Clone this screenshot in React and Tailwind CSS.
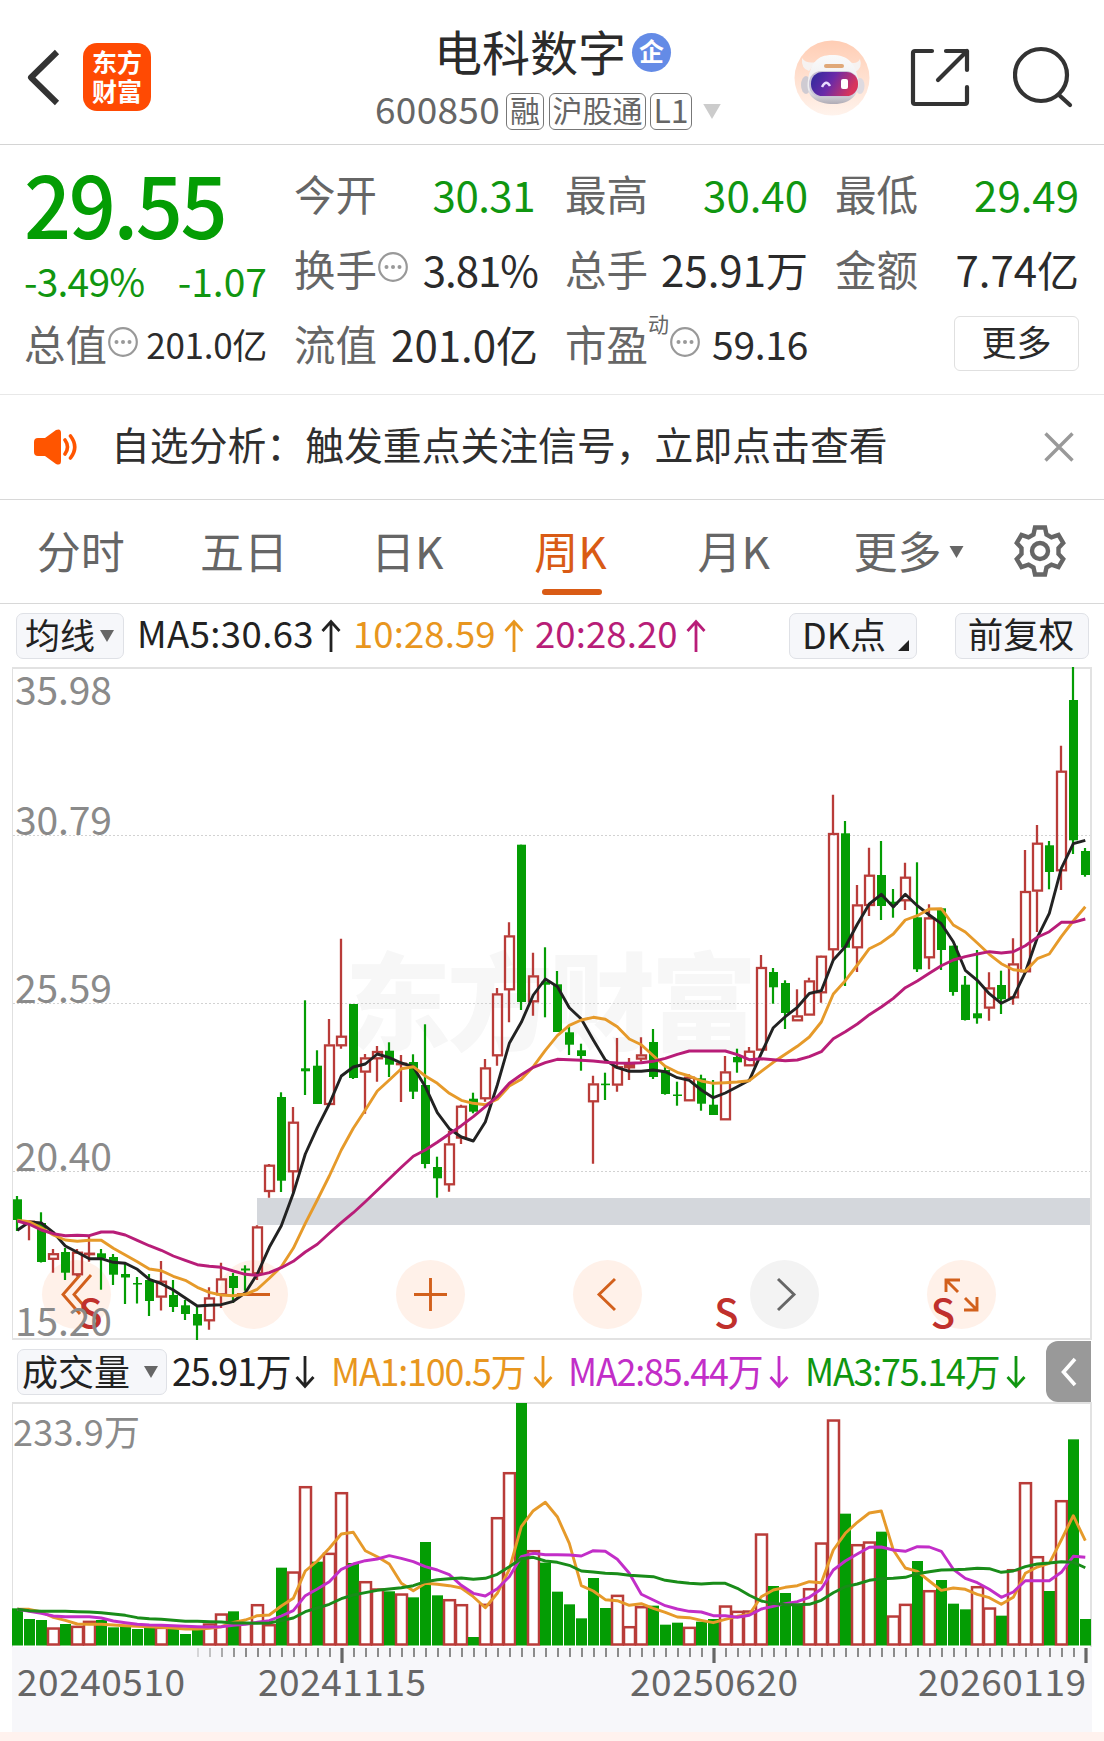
import React from "react";

const FIRST_X = 17;
const STEP = 12;
const GREEN = "#049d04";
const RED = "#b93c39";

// [direction, high, body top, body bottom, low]
const CANDLES = [
  ["g", 1196, 1199.3, 1220, 1231], ["r", 1221, 1221, 1222, 1240.3], ["g", 1212.3, 1223, 1262, 1262.5],
  ["r", 1249, 1253.5, 1259.5, 1272.7], ["g", 1248, 1252, 1272.7, 1280], ["r", 1249, 1252, 1275, 1276.5],
  ["r", 1235, 1253, 1253.5, 1261.7], ["g", 1249, 1253.3, 1258.3, 1289.7], ["g", 1254, 1257, 1274.7, 1285],
  ["g", 1264, 1274, 1277.5, 1304], ["g", 1277, 1283, 1284.5, 1303.5], ["g", 1274, 1280, 1301, 1316],
  ["r", 1261, 1281, 1297.3, 1310.5], ["g", 1280, 1295, 1307, 1312], ["g", 1300, 1305.3, 1314, 1320],
  ["g", 1306, 1314, 1325.5, 1340], ["r", 1287.3, 1297.7, 1321, 1329.7], ["r", 1262.7, 1278.7, 1295, 1308],
  ["g", 1273, 1276, 1288, 1303], ["g", 1265.3, 1268.5, 1270.5, 1290.7], ["r", 1225.3, 1226.7, 1274, 1280],
  ["r", 1164, 1165, 1191.7, 1197.7], ["g", 1092.3, 1097, 1180.7, 1192], ["r", 1107, 1122, 1172, 1192],
  ["g", 1000.3, 1068.3, 1071.3, 1095], ["g", 1050.3, 1065.7, 1104, 1104], ["r", 1019, 1044.7, 1104.7, 1104.7],
  ["r", 938.7, 1036, 1046, 1048.7], ["g", 1004, 1004, 1078, 1079], ["r", 1054, 1057.7, 1072.3, 1113.7],
  ["r", 1046, 1051.3, 1059, 1081.7], ["g", 1042.3, 1050.7, 1064.7, 1077], ["r", 1055, 1063, 1063.5, 1102],
  ["g", 1054.3, 1062, 1091.7, 1099], ["g", 1024.3, 1085, 1164, 1168.3], ["g", 1156.7, 1167, 1178.3, 1197.7],
  ["r", 1130.7, 1143.7, 1185, 1191.7], ["r", 1104.7, 1106, 1138.3, 1144], ["g", 1092.7, 1098.7, 1111.7, 1113.3],
  ["r", 1059, 1067.7, 1099, 1101.7], ["r", 988, 993.7, 1056, 1065.7], ["r", 922.3, 935.7, 990, 1022.3],
  ["g", 844.7, 844.7, 1002, 1010], ["r", 952.7, 975.7, 1002, 1015.7], ["g", 947.3, 981.7, 984.7, 1017.3],
  ["g", 971, 984.3, 1032, 1032], ["g", 1026.7, 1032.3, 1044.7, 1055], ["g", 1043.7, 1050.3, 1056, 1070.7],
  ["r", 1075.7, 1083.7, 1102, 1163.7], ["g", 1072.7, 1083.6, 1085.2, 1100], ["r", 1038, 1066.5, 1085.3, 1091.7],
  ["r", 1058, 1064.3, 1068, 1080], ["r", 1037.3, 1054.7, 1059.3, 1061.7], ["g", 1029, 1042, 1077, 1079],
  ["g", 1067, 1070, 1094, 1094.7], ["g", 1081.7, 1094.5, 1096, 1105.7], ["r", 1074.3, 1077, 1101, 1101],
  ["g", 1074.7, 1078.3, 1103.7, 1110.7], ["g", 1080, 1104.7, 1115, 1115], ["r", 1056, 1071.7, 1120, 1120],
  ["g", 1048.7, 1057, 1062.3, 1072.7], ["r", 1047, 1051, 1066, 1066], ["r", 955, 967.3, 1050.3, 1050.3],
  ["g", 968, 972, 987.3, 1003.7], ["g", 980.3, 983, 1013, 1029], ["r", 989.3, 1015.7, 1021, 1021],
  ["r", 977.7, 980.7, 1015.3, 1015.3], ["r", 955.7, 956, 993, 1002.7], ["r", 794.7, 833.3, 950, 960],
  ["g", 821, 833.3, 947.7, 986], ["r", 885, 904.7, 948, 972], ["r", 847.7, 875, 905.7, 916],
  ["g", 841, 875, 906, 920], ["g", 889, 901.7, 904.7, 917.7], ["r", 862.7, 877, 901, 910],
  ["g", 862.3, 917.3, 969.3, 972], ["r", 904.3, 917.7, 958, 969.3], ["g", 908.3, 908.3, 950, 970],
  ["g", 945.7, 945.7, 992, 995.7], ["g", 976, 984.7, 1020, 1020.5], ["g", 950, 1013.3, 1018.3, 1023.7],
  ["r", 972.3, 987.7, 1008.3, 1020.7], ["g", 970.7, 985, 999.3, 1014], ["r", 938.3, 963.7, 998, 1004.7],
  ["r", 850, 891.3, 972, 972], ["r", 825, 843, 891.3, 932], ["g", 841, 845.3, 872, 889.3],
  ["r", 745.7, 771, 871, 890], ["g", 667, 700, 840.3, 854], ["g", 848, 851, 875, 876.7],
];

const MA5 = [1230.3, 1222, 1223, 1232.3, 1246, 1252.3, 1258.7, 1258.7, 1262.3, 1263.3, 1269.3, 1279.3, 1283.7, 1290, 1298, 1306, 1305.3, 1304.7, 1301.3, 1292.7, 1274, 1247.3, 1225.7, 1193.3, 1154, 1127.7, 1104, 1076, 1067, 1064, 1054, 1057.7, 1063, 1066.7, 1086.7, 1112.7, 1128.7, 1137, 1141, 1122, 1085, 1043.3, 1022.3, 995, 979, 986.5, 1007.7, 1019, 1040, 1060, 1067.7, 1071.3, 1071.3, 1070, 1071.7, 1077.7, 1080.3, 1090, 1097.7, 1093, 1086.7, 1080.3, 1053.3, 1027.7, 1016.7, 1007.3, 993.5, 990.7, 960, 946.7, 924.3, 904, 894.3, 907, 894.3, 905.7, 915, 923.7, 941.7, 970.3, 980.3, 993.7, 1003.3, 997.3, 972.3, 937.7, 913.3, 868.3, 843.7, 840.3];
const MA10 = [1220.3, 1221.7, 1227.7, 1235, 1240, 1241.3, 1240.3, 1240.3, 1248.3, 1255, 1261.7, 1269, 1270.7, 1276.3, 1280.3, 1287.3, 1292.3, 1295, 1295.7, 1294.3, 1289.3, 1278.3, 1266.7, 1248.3, 1223.3, 1200, 1176, 1150, 1128.3, 1110, 1091, 1080, 1068.7, 1066.7, 1076, 1083.3, 1093.3, 1100.3, 1103.3, 1104.7, 1099.3, 1086, 1079.3, 1066.7, 1050.3, 1035.7, 1025.3, 1020, 1017.3, 1019.3, 1026.7, 1039, 1044.7, 1055.7, 1066.3, 1072.3, 1076, 1081, 1083.3, 1082.7, 1082, 1080.7, 1071.3, 1062.3, 1054.3, 1046.3, 1037, 1022, 994, 980.7, 965, 948.7, 942.7, 934, 920, 915.7, 909, 908.7, 925, 932, 943, 954.3, 963.7, 969.7, 971.3, 958.7, 954, 936.7, 921, 906.7];
const MA20 = [1221, 1224.3, 1230, 1233.7, 1235.7, 1235.3, 1235.7, 1232, 1232, 1235, 1240.3, 1245.7, 1250.3, 1256, 1260.3, 1264.7, 1266.3, 1267.3, 1271, 1274.3, 1275.3, 1272.7, 1267.7, 1261.3, 1252, 1244.3, 1233.3, 1222.7, 1212.7, 1201.7, 1190.3, 1178.7, 1167.3, 1156.3, 1150, 1142.3, 1134, 1125.7, 1116.7, 1106.7, 1096.7, 1083.3, 1074.7, 1067.3, 1062.7, 1059.3, 1059.7, 1060.3, 1061, 1062.3, 1063, 1063.3, 1062.7, 1061.3, 1058.3, 1054.3, 1051, 1051, 1051, 1051, 1054.7, 1059.7, 1058.7, 1059.7, 1060.7, 1060, 1056.7, 1051.7, 1038.7, 1031.7, 1024, 1014.7, 1007, 998.3, 987.7, 981, 973.3, 965.7, 960, 956.7, 954, 951.7, 953, 951.7, 945.7, 937.3, 931.7, 922.3, 922.3, 919];

// [direction, bar top in thirds of a pixel below the panel origin]
const VOLUMES = [
  ["g", 685], ["g", 717], ["g", 720], ["r", 742], ["g", 732], ["r", 737], ["r", 722], ["g", 720], ["g", 742], ["g", 737],
  ["g", 747], ["g", 740], ["r", 740], ["g", 744], ["g", 762], ["g", 750], ["r", 730], ["r", 700], ["g", 694], ["r", 728],
  ["r", 672], ["r", 732], ["g", 563], ["r", 574], ["r", 318], ["g", 545], ["r", 518], ["r", 336], ["g", 549], ["r", 603],
  ["r", 625], ["g", 634], ["r", 640], ["g", 652], ["g", 486], ["g", 646], ["r", 657], ["r", 672], ["g", 771], ["r", 671],
  ["r", 411], ["r", 276], ["g", 69], ["r", 510], ["g", 548], ["g", 635], ["g", 673], ["g", 715], ["g", 594], ["g", 684],
  ["r", 644], ["r", 738], ["r", 678], ["g", 677], ["g", 734], ["g", 728], ["r", 740], ["g", 725], ["g", 717], ["r", 676],
  ["r", 692], ["r", 691], ["r", 460], ["g", 618], ["g", 639], ["g", 675], ["r", 624], ["r", 487], ["r", 118], ["g", 401],
  ["r", 492], ["r", 484], ["g", 455], ["r", 706], ["r", 671], ["g", 543], ["r", 630], ["g", 600], ["g", 671], ["g", 688],
  ["r", 618], ["r", 682], ["g", 707], ["r", 567], ["r", 306], ["r", 528], ["g", 633], ["r", 360], ["g", 178], ["g", 717],
];
const VMA1 = [688, 688, 696, 712, 721, 732, 733, 733, 735, 737, 739, 740, 742, 744, 747, 747, 745, 740, 727, 720, 707, 705, 678, 655, 573, 543, 505, 462, 457, 512, 530, 552, 610, 632, 610, 613, 617, 624, 650, 683, 640, 568, 440, 392, 367, 410, 490, 617, 633, 659, 662, 676, 671, 685, 697, 711, 713, 721, 728, 718, 709, 703, 650, 630, 622, 617, 605, 608, 510, 460, 427, 399, 393, 510, 564, 574, 603, 631, 624, 628, 643, 653, 673, 652, 580, 561, 550, 480, 407, 482];
const VMA2 = [688, 694, 700, 708, 710, 710, 710, 714, 723, 728, 733, 735, 736, 737, 739, 740, 741, 740, 736, 733, 727, 722, 708, 692, 647, 627, 605, 568, 552, 542, 537, 527, 535, 545, 560, 570, 584, 616, 640, 648, 626, 590, 530, 520, 524, 524, 525, 528, 512, 514, 538, 580, 643, 660, 677, 687, 694, 696, 707, 707, 712, 706, 687, 679, 671, 665, 652, 627, 570, 543, 522, 502, 501, 510, 514, 500, 501, 514, 568, 595, 608, 628, 652, 636, 602, 602, 602, 577, 529, 532];
const VMA3 = [688, 692, 694, 694, 694, 695, 696, 698, 702, 706, 713, 716, 718, 721, 724, 724, 725, 726, 729, 729, 730, 729, 722, 714, 695, 684, 673, 656, 645, 638, 631, 627, 623, 617, 605, 599, 596, 594, 598, 595, 583, 560, 536, 532, 543, 547, 556, 573, 576, 580, 581, 586, 588, 590, 601, 606, 610, 612, 610, 610, 625, 646, 663, 670, 674, 674, 673, 661, 638, 620, 612, 601, 596, 595, 592, 581, 575, 570, 569, 568, 565, 566, 577, 573, 560, 552, 549, 545, 547, 563];

const volY = (v) => 1380 + v / 3;
const line = (values, map = (v) => v) =>
  values.map((v, i) => `${FIRST_X + 0.3 + i * STEP},${map(v).toFixed(1)}`).join(" ");

function Line({ values, map, color }) {
  return <polyline points={line(values, map)} fill="none" stroke={color} strokeWidth="2.9" strokeLinejoin="round" />;
}

function Label({ x, y, w, size, fill = "#8a8a8a", children }) {
  return (
    <text x={x} y={y} fontSize={size} fill={fill} textLength={w} lengthAdjust="spacing">
      {children}
    </text>
  );
}

function Dots() {
  return (
    <svg viewBox="0 0 30 30" className="-mt-[4px] ml-px size-[30px] shrink-0" fill="#999">
      <circle cx="15" cy="15" r="13.8" fill="none" stroke="#999" strokeWidth="2.2" />
      <circle cx="8.5" cy="15" r="2" />
      <circle cx="15" cy="15" r="2" />
      <circle cx="21.5" cy="15" r="2" />
    </svg>
  );
}

function Arrow({ down, className }) {
  return (
    <svg viewBox="0 0 20 34" className={`h-[34px] w-5 shrink-0 ${className}`} fill="none" stroke="currentColor" strokeWidth="2.8">
      {down ? <path d="M10 1V31M1.5 22L10 31.5L18.5 22" /> : <path d="M10 33V3M1.5 12L10 2.5L18.5 12" />}
    </svg>
  );
}

function Tri({ className }) {
  return (
    <svg viewBox="0 0 14 12" className={`shrink-0 ${className}`} fill="currentColor">
      <path d="M0 0H14L7 12Z" />
    </svg>
  );
}

function Header() {
  return (
    <header className="flex h-[145px] border-b border-[#d4d4d4] text-[#2b2b2b]">
      <svg viewBox="0 0 34 58" className="mt-[48px] ml-[26px] h-[58px] w-[34px]" fill="none" stroke="#333" strokeWidth="6">
        <path d="M31 4L5 29.500L31 55" strokeLinejoin="round" />
      </svg>
      <div className="mt-[43px] ml-[23px] flex h-[68px] w-[68px] flex-col items-center justify-center rounded-[14px] bg-[#ff4a03] text-[25px] leading-[28.500px] font-bold text-white">
        <span className="-mt-[3px]">东方</span>
        <span>财富</span>
      </div>
      <div className="ml-[224px] w-[353px] pt-[25px]">
        <div className="flex h-[54px] items-center pl-[59px]">
          <span className="-mt-[5px] text-[48px] leading-none">电科数字</span>
          <span className="ml-[6px] flex size-[39px] items-center justify-center rounded-full bg-[#648be6] pb-[3px] text-[25px] leading-none font-bold text-white">企</span>
        </div>
        <div className="mt-[13px] flex h-[38px] items-center text-[#666]">
          <span className="-mt-[5px] w-[131px] text-[37px] leading-none tracking-[0.300px]">600850</span>
          <span className="flex h-[37px] w-[38px] items-center justify-center rounded-[6px] border border-[#777] pb-[4px] text-[30px] leading-none">融</span>
          <span className="ml-[5px] flex h-[37px] w-[97px] items-center justify-center rounded-[6px] border border-[#777] pb-[4px] text-[30px] leading-none">沪股通</span>
          <span className="ml-[4px] flex h-[37px] w-[42px] items-center justify-center rounded-[6px] border border-[#777] pb-[4px] text-[32px] leading-none">L1</span>
          <Tri className="ml-[9px] h-[15px] w-[22px] text-[#ccc]" />
        </div>
      </div>
      <svg viewBox="0 0 76 80" className="mt-[38px] ml-[66px] h-[80px] w-[76px]">
        <defs>
          <linearGradient id="halo" x1="0" y1="0" x2="0" y2="1">
            <stop offset="0" stopColor="#ffcdb4" />
            <stop offset="1" stopColor="#fff3ec" />
          </linearGradient>
          <linearGradient id="visor" x1="0" y1="0" x2="1" y2="0.300">
            <stop offset="0" stopColor="#2b2a9c" />
            <stop offset="0.500" stopColor="#6a2aa8" />
            <stop offset="1" stopColor="#d8345c" />
          </linearGradient>
          <linearGradient id="shell" x1="0" y1="0" x2="0" y2="1">
            <stop offset="0" stopColor="#fafafa" />
            <stop offset="0.700" stopColor="#ececef" />
            <stop offset="1" stopColor="#b0acb6" />
          </linearGradient>
        </defs>
        <circle cx="38" cy="40" r="37.500" fill="url(#halo)" />
        <path d="M8 20Q7 31 15 33L22 24Q12 26 8 20ZM66 21Q69 30 61 34L54 24Q63 27 66 21Z" fill="#f6f2f1" />
        <ellipse cx="12" cy="47" rx="5" ry="9" fill="#cfcbd2" />
        <ellipse cx="66" cy="48" rx="4.500" ry="8" fill="#dedae0" />
        <path d="M38 17C54 17 61 25 64 40C67 56 57 66 40 66C22 66 11 58 14 42C17 25 23 17 38 17Z" fill="url(#shell)" />
        <rect x="30" y="26" width="20" height="4" rx="2" fill="#e0a878" />
        <rect x="15" y="33" width="49" height="26" rx="12" fill="#c9c3d6" />
        <rect x="17" y="34" width="47" height="24" rx="11.500" fill="url(#visor)" />
        <path d="M28 49Q32 41 36 48" fill="none" stroke="#e8dcff" strokeWidth="2.500" />
        <rect x="47" y="41" width="7" height="10" rx="2" fill="#fff" />
      </svg>
      <svg viewBox="0 0 60 60" className="mt-[47px] ml-[40px] size-[60px]" fill="none" stroke="#333" strokeWidth="4.200" strokeLinecap="round" strokeLinejoin="round">
        <path d="M22 4H5Q3 4 3 6V55Q3 57 5 57H55Q57 57 57 55V40" />
        <path d="M36 4H57V23M57 4L28 33" />
      </svg>
      <svg viewBox="0 0 62 62" className="mt-[46px] ml-[43px] size-[62px]" fill="none" stroke="#333" strokeWidth="4.200" strokeLinecap="round">
        <circle cx="28" cy="29" r="26" />
        <path d="M46 49L57 59" />
      </svg>
    </header>
  );
}

function Stat({ label, value, dots, className = "", vClass = "text-[#2b2b2b] text-[42px]" }) {
  return (
    <div className={`flex items-center ${className}`}>
      <span className="text-[41.500px] leading-none text-[#666]">{label}</span>
      {dots}
      <span className={`ml-auto leading-none whitespace-nowrap ${vClass}`}>{value}</span>
    </div>
  );
}

function Quote() {
  const green = "text-[#109610] text-[42px]";
  return (
    <section className="grid h-[250px] grid-cols-[243px_244px_243px_244px] grid-rows-[75px_75px_75px] gap-x-[27px] border-b border-[#e8e8e8] pt-[11px] pl-[24px]">
      <div className="flex items-center pt-[15px] text-[87px] leading-none font-medium tracking-[-2.500px] text-[#049d04]">
        <span className="origin-left scale-x-[0.950]">29.55</span>
      </div>
      <Stat label="今开" value="30.31" vClass={green + " pr-[3px] tracking-[-0.500px]"} />
      <Stat label="最高" value="30.40" vClass={green} />
      <Stat label="最低" value="29.49" vClass={green} />

      <div className="flex items-center justify-between pt-[24px] text-[39px] leading-none text-[#109610]">
        <span className="tracking-[-0.800px]">-3.49%</span>
        <span>-1.07</span>
      </div>
      <Stat label="换手" value="3.81%" dots={<Dots />} vClass="text-[#2b2b2b] text-[42px] tracking-[-1px]" />
      <Stat label="总手" value="25.91万" />
      <Stat label="金额" value="7.74亿" />

      <Stat label="总值" value="201.0亿" dots={<Dots />} vClass="text-[#2b2b2b] text-[35px] tracking-[-0.300px]" />
      <Stat label="流值" value="201.0亿" />
      <Stat
        label="市盈"
        value="59.16"
        dots={
          <>
            <span className="-mt-[40px] text-[21px] leading-none text-[#666]">动</span>
            <Dots />
          </>
        }
        vClass="text-[#2b2b2b] text-[39px] tracking-[-0.300px]"
      />
      <div className="flex items-center justify-end">
        <button className="-mt-px flex h-[55px] w-[125px] items-center justify-center rounded-[6px] border border-[#e0e0e0] pb-[6px] text-[35px] leading-none text-[#2b2b2b]">更多</button>
      </div>
    </section>
  );
}

function Notice() {
  return (
    <section className="flex h-[105px] items-center border-b border-[#d8d8d8] pl-[34px]">
      <svg viewBox="0 0 44 36" className="-mt-px h-[36px] w-[44px] shrink-0" fill="#ff5500">
        <path d="M4 9H11L22 1Q27-1 27 4V32Q27 37 22 35L11 27H4Q0 27 0 23V13Q0 9 4 9Z" />
        <path d="M31 11Q36 18 31 25M36.500 7Q45 18 36.500 29" fill="none" stroke="#ff5500" strokeWidth="3.600" strokeLinecap="round" />
      </svg>
      <span className="-mt-[8px] ml-[33px] text-[38.850px] leading-none whitespace-nowrap text-[#2f2f2f]">自选分析：触发重点关注信号，立即点击查看</span>
      <svg viewBox="0 0 30 30" className="-mt-px mr-[30px] ml-auto size-[30px] shrink-0" fill="none" stroke="#999" strokeWidth="3.400">
        <path d="M1.500 1.500L28.500 28.500M28.500 1.500L1.500 28.500" />
      </svg>
    </section>
  );
}

const TABS = ["分时", "五日", "日K", "周K", "月K"];

function Tabs() {
  return (
    <nav className="flex h-[104px] border-b border-[#d8d8d8] text-[44px] leading-none text-[#666]">
      {TABS.map((name) => (
        <div key={name} className={`flex w-[163.300px] shrink-0 flex-col items-center pt-[28px] ${name === "周K" ? "text-[#d95b15]" : ""}`}>
          <span className="-ml-[2px]">{name}</span>
          {name === "周K" && <span className="mt-[17px] h-[6px] w-[60px] rounded-full bg-[#d95b15]" />}
        </div>
      ))}
      <div className="flex h-[103px] items-center pl-[37px]">
        <span className="-mt-[3px]">更多</span>
        <Tri className="ml-[8px] h-[12px] w-[15px]" />
      </div>
      <svg viewBox="-26 -26 52 52" className="mt-[25px] ml-[50px] size-[52px]" fill="none" stroke="#666" strokeWidth="4.400">
        <path d="M-5-23.500H5L6.500-16.500L11.500-13.700L18.500-16L23.200-8L18.500-3V3L23.200 8L18.500 16L11.500 13.700L6.500 16.500L5 23.500H-5L-6.500 16.500L-11.500 13.700L-18.500 16L-23.200 8L-18.500 3V-3L-23.200-8L-18.500-16L-11.500-13.700L-6.500-16.500Z" />
        <circle r="8" />
      </svg>
    </nav>
  );
}

const BOX = "flex shrink-0 items-center rounded-[7px] border border-[#dfe1e6] bg-[#f6f7fa] text-[#222]";

function MaBar() {
  return (
    <div className="flex h-[63px] items-center pl-[16px] text-[36.500px] leading-none whitespace-nowrap">
      <div className={`${BOX} h-[46px] w-[108px] pl-[8px]`}>
        <span className="-mt-[5px] text-[35px]">均线</span>
        <Tri className="ml-[5px] h-[12px] w-[14px] text-[#666]" />
      </div>
      <span className="-mt-[4px] ml-[13px] w-[184px] tracking-[0.400px] text-[#222]">MA5:30.63</span>
      <Arrow className="text-[#222]" />
      <span className="-mt-[4px] ml-[12px] w-[151px] tracking-[0.100px] text-[#e8961e]">10:28.59</span>
      <Arrow className="text-[#e8961e]" />
      <span className="-mt-[4px] ml-[11px] w-[151px] tracking-[0.100px] text-[#b81d78]">20:28.20</span>
      <Arrow className="text-[#b81d78]" />
      <div className={`${BOX} ml-[83px] h-[46px] w-[128px] pl-[12px]`}>
        <span className="-mt-[5px] w-[96px] text-[36px]">DK点</span>
        <svg viewBox="0 0 11 11" className="mt-[20px] size-[11px]" fill="#222">
          <path d="M11 0V11H0Z" />
        </svg>
      </div>
      <div className={`${BOX} ml-[38px] h-[46px] w-[134px] justify-center`}>
        <span className="-mt-[5px] -ml-[2px] text-[35.500px]">前复权</span>
      </div>
    </div>
  );
}

const TOOLS = [
  ["back", "M81 15L64 34.500L81 54M70 15L53 34.500L70 54"],
  ["minus", "M18 34.500H51"],
  ["plus", "M18 34.500H51M34.500 18V51"],
  ["left", "M42 19L26 34.500L42 50"],
  ["right", "M28 19L44 34.500L28 50"],
  ["expand", "M19 32V20H33M20 21L31 32M50 37V50H37M49 49L38 38"],
];

function KChart() {
  return (
    <div className="relative h-[674px]">
      <svg viewBox="0 667 1104 674" className="absolute inset-0 h-[674px] w-[1104px]">
        <text x="345" y="1042" fontSize="106" fontWeight="900" fill="#f7f7f7" textLength="412">东方财富</text>
      </svg>
      <div className="absolute top-[593px] left-[42px] flex gap-[108px]">
        {TOOLS.map(([name, d]) => (
          <button key={name} aria-label={name} className={`size-[69px] rounded-full ${name === "right" ? "bg-[#f3f3f3] text-[#666]" : "bg-[#fff1e9] text-[#d2601c]"}`}>
            <svg viewBox={name === "back" ? "32 0 69 69" : "0 0 69 69"} className="size-[69px]" fill="none" stroke="currentColor" strokeWidth="2.900">
              <path d={d} />
            </svg>
          </button>
        ))}
      </div>
      <svg viewBox="0 667 1104 674" className="relative h-[674px] w-[1104px]">
        {[835.5, 1003.5, 1171.5].map((y) => (
          <path key={y} d={`M13 ${y}H1091`} stroke="#d2d2d2" strokeWidth="1" strokeDasharray="2 2" />
        ))}
        <rect x="257" y="1198" width="834" height="27" fill="#d4d7dc" />
        <path d="M12.500 668V1340" stroke="#e0e0e0" strokeWidth="1" />
        <path d="M12 668H1091V1339H12" fill="none" stroke="#e2e2e2" strokeWidth="2" />
        {CANDLES.map(([dir, high, top, bottom, low], i) => {
          const x = FIRST_X + i * STEP;
          if (dir === "g") {
            return (
              <g key={i} fill={GREEN}>
                <rect x={x - 1.1} y={high} width="2.2" height={low - high} />
                <rect x={x - 4} y={top} width="9" height={bottom - top} />
              </g>
            );
          }
          return (
            <g key={i} stroke={RED} strokeWidth="2.3" fill="none">
              <path d={`M${x} ${high}V${top}M${x} ${bottom}V${low}`} />
              <rect x={x - 4} y={top + 0.7} width="9" height={Math.max(bottom - top - 1.4, 0.5)} />
            </g>
          );
        })}
        <Line values={MA5} color="#222" />
        <Line values={MA10} color="#e69a2a" />
        <Line values={MA20} color="#b81d78" />
        {[90.5, 726.5, 943].map((x) => (
          <text key={x} x={x} y="1328" fontSize="40" fontWeight="500" fill="#c0302c" textAnchor="middle">S</text>
        ))}
        <Label x="15" y="705" w="97" size="39">35.98</Label>
        <Label x="15" y="835" w="97" size="39">30.79</Label>
        <Label x="15" y="1003" w="97" size="39">25.59</Label>
        <Label x="15" y="1171" w="97" size="39">20.40</Label>
        <Label x="15" y="1336" w="97" size="39">15.20</Label>
      </svg>
    </div>
  );
}

function VolBar() {
  const item = "-mt-[4px] shrink-0 origin-left scale-x-[0.955]";
  return (
    <div className="flex h-[61px] pl-[17px] text-[37.500px] leading-none whitespace-nowrap">
      <div className={`${BOX} mt-[8px] h-[46px] w-[150px] pl-[4px]`}>
        <span className="-mt-[5px] text-[36px]">成交量</span>
        <Tri className="ml-[14px] h-[12px] w-[14px] text-[#666]" />
      </div>
      <div className="flex h-[61px] items-center tracking-[-1.200px]">
        <span className={`${item} ml-[5px] w-[123px] text-[#222]`}>25.91万</span>
        <Arrow down className="text-[#222]" />
        <span className={`${item} ml-[16px] w-[202px] text-[#e8961e]`}>MA1:100.5万</span>
        <Arrow down className="text-[#e8961e]" />
        <span className={`${item} ml-[15px] w-[201px] text-[#c22ec8]`}>MA2:85.44万</span>
        <Arrow down className="text-[#c22ec8]" />
        <span className={`${item} ml-[16px] w-[201px] text-[#109610]`}>MA3:75.14万</span>
        <Arrow down className="text-[#109610]" />
      </div>
      <button aria-label="collapse" className="ml-[20px] flex w-[45px] items-center justify-center rounded-l-[12px] bg-[#999]">
        <svg viewBox="0 0 18 30" className="h-[30px] w-[18px]" fill="none" stroke="#fff" strokeWidth="3.600">
          <path d="M15 2L3.500 15L15 28" />
        </svg>
      </button>
    </div>
  );
}

const MINOR_TICKS = Array.from({ length: 75 }, (_, i) => 198 + i * 12).filter((x) => x !== 342 && x !== 714 && x < 1080);

function Volume() {
  return (
    <svg viewBox="0 1402 1104 339" className="h-[339px] w-[1104px]">
      <rect x="12" y="1647" width="1080" height="85" fill="#f7f7fa" />
      <rect x="0" y="1732" width="1104" height="9" fill="#fff2ee" />
      <path d="M12.500 1403V1647" stroke="#e0e0e0" strokeWidth="1" />
      <path d="M12 1403H1091V1647" fill="none" stroke="#e2e2e2" strokeWidth="2" />
      <Label x="13" y="1446" w="127" size="36">233.9万</Label>
      {VOLUMES.map(([dir, v], i) => {
        const x = FIRST_X + i * STEP;
        const top = volY(v);
        return dir === "g" ? (
          <rect key={i} x={Math.max(x - 5, 12)} y={top} width="11" height={1645.5 - top} fill={GREEN} />
        ) : (
          <rect key={i} x={x - 5} y={top + 1.2} width="11" height={1643.300 - top} fill="#fff" stroke={RED} strokeWidth="2.500" />
        );
      })}
      <Line values={VMA1} map={volY} color="#e69a2a" />
      <Line values={VMA2} map={volY} color="#c22ec8" />
      <Line values={VMA3} map={volY} color="#198c19" />
      {MINOR_TICKS.map((x, i) => (
        <path key={x} d={`M${x} 1648V1657`} stroke="#8c8c8c" strokeWidth="2" opacity={Math.min(1, 0.3 + i * 0.2)} />
      ))}
      {[342, 714, 1086].map((x) => (
        <path key={x} d={`M${x} 1648V1663`} stroke="#666" strokeWidth="3.200" />
      ))}
      <Label x="17" y="1696" w="168" size="37" fill="#666">20240510</Label>
      <Label x="258" y="1696" w="168" size="37" fill="#666">20241115</Label>
      <Label x="630" y="1696" w="168" size="37" fill="#666">20250620</Label>
      <Label x="918" y="1696" w="168" size="37" fill="#666">20260119</Label>
    </svg>
  );
}

export default function App() {
  return (
    <main className="h-[1741px] w-[1104px] overflow-hidden bg-white font-['Noto_Sans_CJK_SC',sans-serif]">
      <Header />
      <Quote />
      <Notice />
      <Tabs />
      <MaBar />
      <KChart />
      <VolBar />
      <Volume />
    </main>
  );
}
